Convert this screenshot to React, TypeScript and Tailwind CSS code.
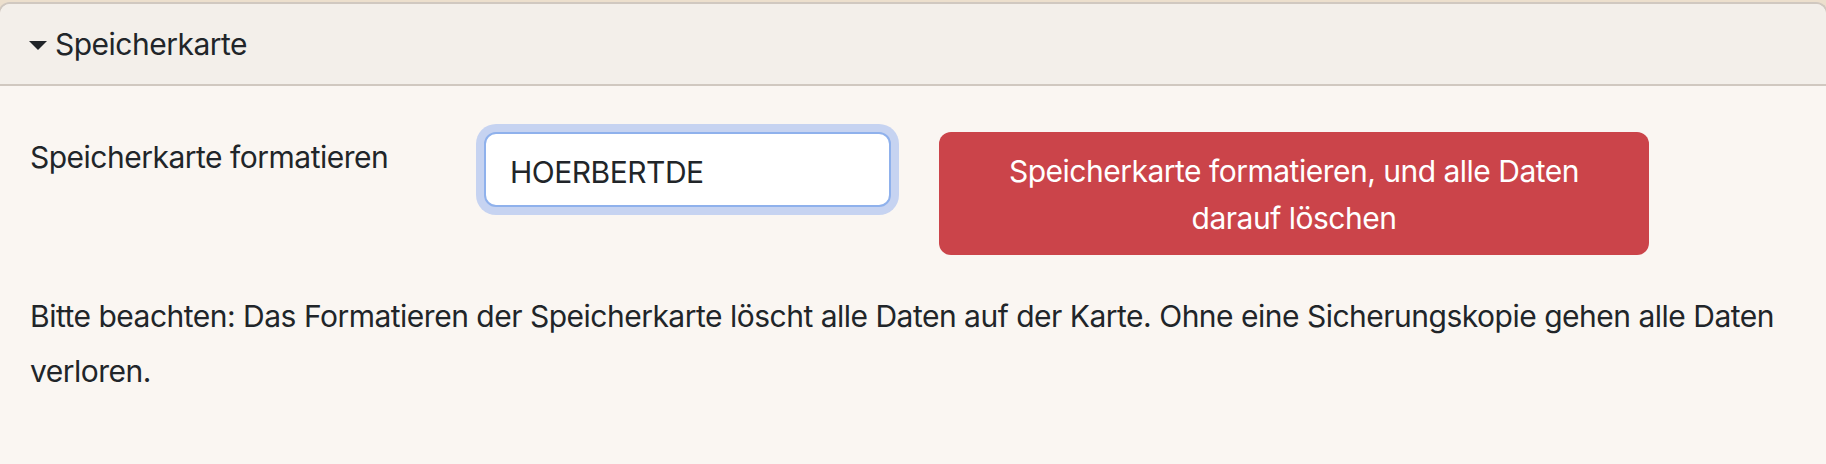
import React from "react";

const font = { fontFamily: "Inter, 'Noto Sans', sans-serif" };

const App: React.FC = () => {
  return (
    <div className="min-h-[464px] w-full overflow-hidden bg-[#ecdfcd] pt-[2px] text-[#212529]" style={font}>
      <div className="-ml-[2px] -mr-[2px] min-h-[462px] rounded-t-[12px] border-2 border-b-0 border-[#d0c8c0] bg-[#faf6f2]">
        <div className="flex h-[82px] items-center rounded-t-[10px] border-b-2 border-[#d0c8c0] bg-[#f3efea] pl-[29px] text-[30px] leading-[47px] tracking-[-0.5px]">
          <svg width="18" height="9" viewBox="0 0 18 9" className="mr-[8px] mt-[2px]">
            <path d="M0 0 H18 L9 9 Z" fill="#212529" />
          </svg>
          <span>Speicherkarte</span>
        </div>

        <div className="px-[30px] pt-[46px] text-[30px] leading-[47px] tracking-[-0.5px]">
          <div className="flex items-start">
            <label className="mt-[2px] w-[454px] shrink-0">Speicherkarte formatieren</label>
            <div className="shrink-0">
              <input
                readOnly
                value="HOERBERTDE"
                className="h-[75px] w-[407px] rounded-[12px] border-2 border-[#8fb1ec] bg-white px-[24px] pt-[4px] text-[30px] leading-[47px] tracking-[-0.5px] text-[#212529] shadow-[0_0_0_8px_#c6d3f1] outline-none"
                style={font}
              />
            </div>
            <button className="ml-[48px] h-[123px] w-[710px] shrink-0 rounded-[12px] bg-[#cb444a] px-[24px] pt-[2px] text-center text-[30px] leading-[47px] tracking-[-0.5px] text-white">
              Speicherkarte formatieren, und alle Daten darauf löschen
            </button>
          </div>

          <p className="mt-[34px] leading-[55px]">
            Bitte beachten: Das Formatieren der Speicherkarte löscht alle Daten auf der Karte. Ohne eine Sicherungskopie gehen alle Daten verloren.
          </p>
        </div>
      </div>
    </div>
  );
};

export default App;
